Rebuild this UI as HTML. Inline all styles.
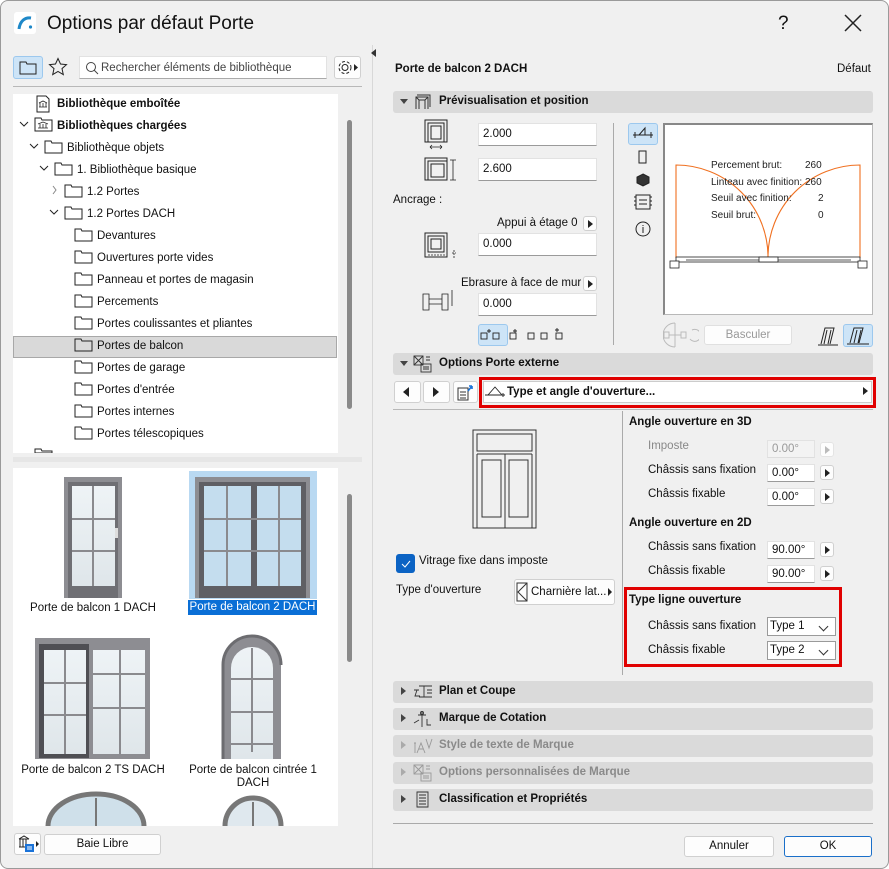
<!DOCTYPE html>
<html><head><meta charset="utf-8">
<style>
*{box-sizing:border-box;margin:0;padding:0}
body{width:889px;height:869px;background:#fff;font-family:"Liberation Sans",Arial,sans-serif;font-size:11.5px;color:#111;position:relative;overflow:hidden}
.win{position:absolute;left:0;top:0;width:889px;height:869px;background:#f0f0f0;border:1px solid #9a9a9a;border-radius:8px;overflow:hidden}
.a{position:absolute;white-space:nowrap}
.t{position:absolute;white-space:nowrap;line-height:14px}
.b{font-weight:bold}
.inp{position:absolute;background:#fff;border:1px solid #e2e2e2;border-bottom:1px solid #9a9a9a;padding-left:4px;line-height:21px}
.btn{position:absolute;background:#fdfdfd;border:1px solid #d0d0d0;border-radius:3px;text-align:center}
.sb{position:absolute;width:14px;height:15px;background:#fdfdfd;border:1px solid #d0d0d0;border-radius:3px}
.sb:after{content:"";position:absolute;left:4px;top:3px;border-left:5px solid #222;border-top:4px solid transparent;border-bottom:4px solid transparent}
.sb.dis:after{border-left-color:#bbb}
.hdr{position:absolute;left:392px;width:480px;height:22px;background:#dadada;border-radius:3px}
.hdr .tri{position:absolute;left:7px;top:8px;border-top:5px solid #444;border-left:4px solid transparent;border-right:4px solid transparent}
.hdr .trr{position:absolute;left:8px;top:6px;border-left:5px solid #444;border-top:4px solid transparent;border-bottom:4px solid transparent}
.hdr .lbl{position:absolute;left:46px;top:4px;font-weight:bold;font-size:11.5px}
.hdr.dis .lbl{color:#8a8a8a}.hdr.dis .trr{border-left-color:#aaa}
.sel{position:absolute;background:#fff;border:1px solid #9a9a9a;line-height:20px;padding-left:4px}
.sel:after{content:"";position:absolute;right:8px;top:5px;width:6px;height:6px;border-right:1px solid #333;border-bottom:1px solid #333;transform:rotate(45deg)}
</style></head><body>
<div class="win">
<svg class="a" style="left:13px;top:11px" width="22" height="22"><rect width="22" height="22" rx="3" fill="#fff"/><path d="M5 17 C6 9 11 5 17 6" stroke="#1e88c8" stroke-width="3" fill="none"/><circle cx="16.5" cy="15" r="1.6" fill="#1e88c8"/></svg>
<div class="t" style="left:46px;top:12px;font-size:19px;line-height:22px">Options par défaut Porte</div>
<div class="t" style="left:777px;top:12px;font-size:19px;line-height:22px">?</div>
<svg class="a" style="left:843px;top:13px" width="18" height="18"><path d="M1 1L17 17M17 1L1 17" stroke="#222" stroke-width="1.5"/></svg>

<div class="a" style="left:12px;top:55px;width:30px;height:23px;background:#cde4f7;border:1px solid #9cc8ee;border-radius:3px"></div>
<svg class="a" style="left:18px;top:59px" width="18" height="15"><path d="M1 2h6l1 2h9v10H1z" fill="none" stroke="#222"/></svg>
<svg class="a" style="left:47px;top:56px" width="20" height="20"><path d="M10 1.5l2.5 5.5 6 .6-4.5 4 1.3 6-5.3-3.1-5.3 3.1 1.3-6-4.5-4 6-.6z" fill="none" stroke="#222"/></svg>
<div class="a" style="left:78px;top:55px;width:248px;height:23px;background:#fff;border:1px solid #e2e2e2;border-bottom:1px solid #aaa"></div>
<svg class="a" style="left:84px;top:60px" width="14" height="14"><circle cx="6" cy="6" r="4.5" fill="none" stroke="#444"/><path d="M9 9l4 4" stroke="#444"/></svg>
<div class="t" style="left:100px;top:60px;color:#444;font-size:11.5px">Rechercher éléments de bibliothèque</div>
<div class="btn" style="left:333px;top:55px;width:27px;height:23px"></div>
<svg class="a" style="left:335px;top:58px" width="24" height="17"><circle cx="9" cy="8.5" r="3" fill="none" stroke="#222"/><circle cx="9" cy="8.5" r="6" fill="none" stroke="#222" stroke-dasharray="3 2"/><path d="M18 5l4 3.5-4 3.5z" fill="#222"/></svg>
<div class="a" style="left:12px;top:85px;width:349px;height:1px;background:#b8b8b8"></div>

<div class="a" style="left:12px;top:93px;width:325px;height:359px;background:#fff"></div>
<div class="a" style="left:12px;top:335px;width:324px;height:22px;background:#d9d9d9;border:1px solid #a8a8a8"></div>
<div class="a" style="left:346px;top:119px;width:5px;height:289px;background:#8a8a8a;border-radius:3px"></div>
<svg class="a" style="left:0;top:93px" width="337" height="359" fill="none" stroke="#222" stroke-width="1">
<path d="M36 2h9l3 3v13H36z"/><path d="M38 13h8M39 9v4M42 9v4M45 9v4M38 9l4-2 4 2" stroke-width=".8"/>
<path d="M19 28l4 4 4-4"/><path d="M34 24h6l1 2h10v11H34z"/><path d="M37 34h10M39 30v4M42 30v4M45 30v4M37 30l5-2 5 2" stroke-width=".8"/>
<path d="M29 50l4 4 4-4"/><path d="M44 47h6l1 2h10v10H44z"/>
<path d="M39 72l4 4 4-4"/><path d="M54 69h6l1 2h10v10H54z"/>
<path d="M52 92l3 4-3 4" stroke="#888"/><path d="M64 91h6l1 2h10v10H64z"/>
<path d="M49 116l4 4 4-4"/><path d="M64 113h6l1 2h10v10H64z"/>
<g id="f"><path d="M74 135h6l1 2h10v10H74z"/></g>
<use href="#f" y="22"/><use href="#f" y="44"/><use href="#f" y="66"/><use href="#f" y="88"/><use href="#f" y="110"/><use href="#f" y="132"/><use href="#f" y="154"/><use href="#f" y="176"/><use href="#f" y="198"/>
<path d="M34 355h6l1 2h10v2H34z"/>
</svg>
<div class="t b" style="left:56px;top:96px">Bibliothèque emboîtée</div>
<div class="t b" style="left:56px;top:118px">Bibliothèques chargées</div>
<div class="t" style="left:66px;top:140px">Bibliothèque objets</div>
<div class="t" style="left:76px;top:162px">1. Bibliothèque basique</div>
<div class="t" style="left:86px;top:184px">1.2 Portes</div>
<div class="t" style="left:86px;top:206px">1.2 Portes DACH</div>
<div class="t" style="left:96px;top:228px">Devantures</div>
<div class="t" style="left:96px;top:250px">Ouvertures porte vides</div>
<div class="t" style="left:96px;top:272px">Panneau et portes de magasin</div>
<div class="t" style="left:96px;top:294px">Percements</div>
<div class="t" style="left:96px;top:316px">Portes coulissantes et pliantes</div>
<div class="t" style="left:96px;top:338px">Portes de balcon</div>
<div class="t" style="left:96px;top:360px">Portes de garage</div>
<div class="t" style="left:96px;top:382px">Portes d'entrée</div>
<div class="t" style="left:96px;top:404px">Portes internes</div>
<div class="t" style="left:96px;top:426px">Portes télescopiques</div>
<div class="a" style="left:12px;top:456px;width:349px;height:5px;background:#e6e6e6"></div>

<div class="a" style="left:12px;top:467px;width:325px;height:358px;background:#fff"></div>
<div class="a" style="left:346px;top:493px;width:5px;height:168px;background:#8a8a8a;border-radius:3px"></div>
<div class="a" style="left:188px;top:470px;width:128px;height:128px;background:#b9d9f2"></div>
<svg class="a" style="left:12px;top:467px" width="325" height="358">
<defs><linearGradient id="g" x1="0" y1="0" x2="0" y2="1"><stop offset="0" stop-color="#eef3f6"/><stop offset="1" stop-color="#dfe6ea"/></linearGradient></defs>
<rect x="51" y="9" width="58" height="121" fill="#8d8d92"/><rect x="55" y="14" width="50" height="116" fill="#6f6f74"/>
<rect x="59" y="18" width="43" height="100" fill="url(#g)"/><path d="M80 18v100M59 51h43M59 83h43" stroke="#8a8a8e" stroke-width="2"/><rect x="102" y="60" width="3" height="10" fill="#ddd"/>
<rect x="182" y="9" width="115" height="121" fill="#8d8d92"/><rect x="186" y="14" width="107" height="116" fill="#5f5f64"/>
<rect x="191" y="18" width="47" height="100" fill="#c4ddee"/><rect x="244" y="18" width="44" height="100" fill="#c4ddee"/>
<path d="M214 18v100M266 18v100M191 51h97M191 83h97" stroke="#8a8a8e" stroke-width="2"/>
<rect x="22" y="170" width="115" height="121" fill="#8d8d92"/><rect x="26" y="176" width="50" height="114" fill="#4f4f54"/>
<rect x="31" y="182" width="42" height="104" fill="url(#g)"/><rect x="80" y="182" width="52" height="104" fill="url(#g)"/>
<path d="M52 182v104M107 182v104M31 215h42M31 247h42M80 206h52M80 240h52" stroke="#8a8a8e" stroke-width="2"/>
<path d="M210 291V197a29 29 0 0 1 58 0v94z" fill="#8d8d92"/><path d="M218 291V200a21 21 0 0 1 42 0v91z" fill="url(#g)"/>
<path d="M239 180v104M218 211h42M218 244h42M218 276h42" stroke="#8a8a8e" stroke-width="2"/>
<path d="M210 291V197a29 29 0 0 1 58 0" fill="none" stroke="#6c6c70" stroke-width="3"/>
<path d="M35 358a45 30 0 0 1 96 0" fill="#cfe0ea" stroke="#777" stroke-width="5"/><path d="M83 330v28" stroke="#777" stroke-width="2"/>
<path d="M212 358a28 28 0 0 1 56 0" fill="#dfe8ee" stroke="#777" stroke-width="5"/><path d="M240 334v24" stroke="#777" stroke-width="2"/>
</svg>
<div class="t" style="left:12px;top:600px;width:160px;text-align:center">Porte de balcon 1 DACH</div>
<div class="t" style="left:187px;top:599px;width:129px;height:15px;background:#0a6fd6;color:#fff;text-align:center">Porte de balcon 2 DACH</div>
<div class="t" style="left:12px;top:762px;width:160px;text-align:center">Porte de balcon 2 TS DACH</div>
<div class="t" style="left:172px;top:762px;width:160px;text-align:center">Porte de balcon cintrée 1</div>
<div class="t" style="left:172px;top:775px;width:160px;text-align:center">DACH</div>
<div class="btn" style="left:13px;top:832px;width:27px;height:22px"></div>
<svg class="a" style="left:16px;top:834px" width="22" height="18"><path d="M2 4h10M3 4v8M6 4v8M9 4v8M2 12h10M2 4l5-3 5 3" stroke="#222" fill="none"/><rect x="8" y="9" width="9" height="8" fill="#1a73d9"/><path d="M10 12h5M10 14h5" stroke="#fff"/><path d="M19 6l3 3-3 3z" fill="#222"/></svg>
<div class="btn" style="left:43px;top:833px;width:117px;height:21px;line-height:19px">Baie Libre</div>
<div class="a" style="left:371px;top:44px;width:1px;height:825px;background:#d8d8d8"></div>
<div class="a" style="left:370px;top:48px;border-right:5px solid #333;border-top:4px solid transparent;border-bottom:4px solid transparent"></div>

<div class="t b" style="left:394px;top:61px">Porte de balcon 2 DACH</div>
<div class="t" style="left:836px;top:61px">Défaut</div>

<div class="hdr" style="top:90px"><div class="tri"></div><div class="lbl">Prévisualisation et position</div></div>
<svg class="a" style="left:414px;top:93px" width="16" height="16"><path d="M1 15V3h12v12M4 15V6h6v9M1 3l3 3M13 3l-3 3M2 1h13v12" fill="none" stroke="#333"/></svg>

<svg class="a" style="left:421px;top:117px" width="40" height="230" fill="none" stroke="#222">
<rect x="3" y="2" width="22" height="22"/><rect x="6" y="5" width="16" height="19"/><rect x="9" y="8" width="10" height="13"/><path d="M8 29h12M8 29l2-2M8 29l2 2M20 29l-2-2M20 29l-2 2" stroke-width=".8"/>
<rect x="3" y="40" width="22" height="22"/><rect x="6" y="43" width="19" height="19"/><rect x="9" y="46" width="13" height="13"/><path d="M31 42v20M28 42h6M28 62h6" stroke-width=".8"/>
<rect x="3" y="115" width="22" height="24"/><rect x="6" y="118" width="16" height="16"/><rect x="9" y="121" width="10" height="10"/><path d="M6 137h18M32 132v8M30 135h4" stroke-width=".8" stroke-dasharray="2 1"/>
<path d="M1 176h6v16H1zM20 176h6v16h-6zM7 181h13M7 186h13M30 172v8M30 188v-8" stroke-width=".8"/>
</svg>
<div class="inp" style="left:477px;top:122px;width:119px;height:23px">2.000</div>
<div class="inp" style="left:477px;top:157px;width:119px;height:23px">2.600</div>
<div class="t" style="left:392px;top:192px">Ancrage :</div>
<div class="t" style="left:496px;top:215px">Appui à étage 0</div><div class="sb" style="left:582px;top:215px"></div>
<div class="inp" style="left:477px;top:232px;width:119px;height:23px">0.000</div>
<div class="t" style="left:460px;top:275px">Ebrasure à face de mur</div><div class="sb" style="left:582px;top:275px"></div>
<div class="inp" style="left:477px;top:292px;width:119px;height:23px">0.000</div>
<div class="a" style="left:477px;top:323px;width:30px;height:22px;background:#cde4f7;border:1px solid #9cc8ee;border-radius:3px"></div>
<svg class="a" style="left:479px;top:326px" width="90" height="16" fill="none" stroke="#222" stroke-width=".9">
<rect x="1" y="6" width="6" height="6"/><path d="M9 2v4M7 4h4"/><rect x="13" y="6" width="6" height="6"/>
<rect x="30" y="6" width="6" height="6"/><path d="M35 2v4M33 4h4"/>
<rect x="48" y="6" width="6" height="6"/><rect x="61" y="6" width="6" height="6"/><rect x="76" y="6" width="6" height="6"/><path d="M77 1v4M75 3h4"/>
</svg>
<div class="a" style="left:612px;top:122px;width:1px;height:222px;background:#aaa"></div>
<div class="a" style="left:627px;top:122px;width:30px;height:22px;background:#cde4f7;border:1px solid #9cc8ee;border-radius:3px"></div>
<svg class="a" style="left:630px;top:124px" width="26" height="112" fill="none" stroke="#222">
<path d="M2 10h20M4 7v6M20 7v6M8 10l6-7v7"/>
<rect x="8" y="26" width="7" height="12"/>
<path d="M12 49l6 3v6l-6 3-6-3v-6z" fill="#333"/>
<path d="M5 70h14v14H5zM3 72h2M3 76h2M3 80h2M19 72h2M19 76h2M19 80h2M8 75h8M8 79h8"/>
<circle cx="12" cy="104" r="7"/><path d="M12 102v6M12 100v1"/>
</svg>
<div class="a" style="left:662px;top:122px;width:210px;height:192px;background:#fff;border:1px solid #b8b8b8;border-top:2px solid #888;border-left:2px solid #888"></div>
<svg class="a" style="left:662px;top:122px" width="210" height="192">
<path d="M13 135V42A92 92 0 0 1 105 134M197 135V42A92 92 0 0 0 105 134" stroke="#f07020" fill="none" stroke-width="1.1"/>
<g fill="#fff" stroke="#222" stroke-width=".8"><rect x="13" y="134" width="184" height="5"/><path d="M23 137h73M115 137h73"/><rect x="96" y="134" width="19" height="5"/><rect x="7" y="138" width="9" height="7"/><rect x="195" y="138" width="9" height="7"/></g>
<g font-size="10" font-family="Liberation Sans" fill="#222">
<text x="48" y="45">Percement brut:</text><text x="142" y="45">260</text>
<text x="48" y="62">Linteau avec finition:</text><text x="142" y="62">260</text>
<text x="48" y="78">Seuil avec finition:</text><text x="155" y="78">2</text>
<text x="48" y="95">Seuil brut:</text><text x="155" y="95">0</text></g>
</svg>
<svg class="a" style="left:662px;top:321px" width="36" height="26" fill="none" stroke="#bbb"><path d="M12 1v24M12 1a12 12 0 0 0 0 24M1 10h5v6H1zM18 10h5v6h-5zM6 13h12M29 8a6 6 0 1 1-2 9"/></svg>
<div class="btn" style="left:703px;top:324px;width:88px;height:20px;line-height:18px;color:#999;border-color:#e0e0e0">Basculer</div>
<svg class="a" style="left:815px;top:324px" width="58" height="22" fill="none" stroke="#222"><path d="M2 20h20M5 19l4-16h9l-4 16M8 19l3-14M12 19l3-14"/></svg>
<div class="a" style="left:842px;top:323px;width:30px;height:23px;background:#cde4f7;border:1px solid #9cc8ee;border-radius:3px"></div>
<svg class="a" style="left:845px;top:325px" width="26" height="20" fill="none" stroke="#222"><path d="M1 18h22M4 17l4-15h9l-4 15M8 17l3-13M12 17l3-13"/></svg>

<div class="hdr" style="top:352px"><div class="tri"></div><div class="lbl">Options Porte externe</div></div>
<svg class="a" style="left:412px;top:354px" width="20" height="18" fill="none" stroke="#333" stroke-width=".9"><rect x="1" y="1" width="9" height="9"/><path d="M1 1l9 9M10 1L1 10"/><rect x="8" y="9" width="10" height="8"/><path d="M10 12h6M10 14h6M13 2h4M13 5h4"/></svg>
<div class="btn" style="left:393px;top:380px;width:27px;height:22px"></div><div class="a" style="left:402px;top:386px;border-right:6px solid #222;border-top:5px solid transparent;border-bottom:5px solid transparent"></div>
<div class="btn" style="left:422px;top:380px;width:27px;height:22px"></div><div class="a" style="left:432px;top:386px;border-left:6px solid #222;border-top:5px solid transparent;border-bottom:5px solid transparent"></div>
<div class="btn" style="left:452px;top:380px;width:25px;height:22px"></div>
<svg class="a" style="left:455px;top:382px" width="20" height="18" fill="none" stroke="#333"><path d="M2 5h10v12H2zM4 9h6M4 12h6M4 15h6"/><path d="M12 8l4-5M16 3h-3M16 3v3" stroke="#1a73d9" stroke-width="1.6"/></svg>
<div class="a" style="left:478px;top:376px;width:397px;height:31px;border:3px solid #e00000"></div>
<div class="a" style="left:482px;top:380px;width:389px;height:22px;background:#fff;border:1px solid #ccc"></div>
<svg class="a" style="left:483px;top:383px" width="22" height="14" fill="none" stroke="#222" stroke-width=".9"><path d="M1 11h20M4 11l7-8 7 8M19 9v4"/></svg>
<div class="t b" style="left:506px;top:384px">Type et angle d'ouverture...</div>
<div class="a" style="left:862px;top:386px;border-left:5px solid #222;border-top:4px solid transparent;border-bottom:4px solid transparent"></div>
<div class="a" style="left:392px;top:408px;width:480px;height:1px;background:#b8b8b8"></div>

<svg class="a" style="left:471px;top:428px" width="68" height="102" fill="none" stroke="#333"><rect x="1" y="1" width="63" height="98"/><rect x="5" y="5" width="55" height="17"/><path d="M5 22h55M5 25h55M5 25v74M60 25v74M33 25v74"/><rect x="10" y="31" width="19" height="57"/><rect x="37" y="31" width="19" height="57"/></svg>
<div class="a" style="left:395px;top:553px;width:19px;height:19px;background:#0b63c4;border-radius:3px"></div>
<svg class="a" style="left:399px;top:557px" width="12" height="12"><path d="M2 6l3 3 5-6" stroke="#fff" fill="none" stroke-width="1"/></svg>
<div class="t" style="left:418px;top:553px">Vitrage fixe dans imposte</div>
<div class="t" style="left:395px;top:582px">Type d'ouverture</div>
<div class="btn" style="left:513px;top:578px;width:101px;height:26px;text-align:left"></div>
<svg class="a" style="left:515px;top:581px" width="12" height="20" fill="none" stroke="#333"><rect x="1" y="1" width="10" height="18"/><path d="M11 1L2 10l9 9"/></svg>
<div class="t" style="left:530px;top:584px">Charnière lat...</div>
<div class="a" style="left:607px;top:587px;border-left:4px solid #222;border-top:4px solid transparent;border-bottom:4px solid transparent"></div>
<div class="a" style="left:621px;top:410px;width:1px;height:264px;background:#aaa"></div>

<div class="t b" style="left:628px;top:414px">Angle ouverture en 3D</div>
<div class="t" style="left:647px;top:438px;color:#888">Imposte</div>
<div class="inp" style="left:766px;top:439px;width:48px;height:18px;line-height:17px;background:#f3f3f3;color:#999;border-bottom-color:#ddd">0.00°</div><div class="sb dis" style="left:819px;top:441px;border-color:#e4e4e4"></div>
<div class="t" style="left:647px;top:462px">Châssis sans fixation</div>
<div class="inp" style="left:766px;top:463px;width:48px;height:18px;line-height:17px">0.00°</div><div class="sb" style="left:819px;top:464px"></div>
<div class="t" style="left:647px;top:486px">Châssis fixable</div>
<div class="inp" style="left:766px;top:487px;width:48px;height:18px;line-height:17px">0.00°</div><div class="sb" style="left:819px;top:488px"></div>
<div class="t b" style="left:628px;top:515px">Angle ouverture en 2D</div>
<div class="t" style="left:647px;top:539px">Châssis sans fixation</div>
<div class="inp" style="left:766px;top:540px;width:48px;height:18px;line-height:17px">90.00°</div><div class="sb" style="left:819px;top:541px"></div>
<div class="t" style="left:647px;top:563px">Châssis fixable</div>
<div class="inp" style="left:766px;top:564px;width:48px;height:18px;line-height:17px">90.00°</div><div class="sb" style="left:819px;top:565px"></div>
<div class="a" style="left:623px;top:586px;width:218px;height:80px;border:3px solid #e00000"></div>
<div class="t b" style="left:628px;top:592px">Type ligne ouverture</div>
<div class="t" style="left:647px;top:618px">Châssis sans fixation</div>
<div class="sel" style="left:766px;top:616px;width:69px;height:19px;line-height:17px;padding-left:2px">Type 1</div>
<div class="t" style="left:647px;top:642px">Châssis fixable</div>
<div class="sel" style="left:766px;top:640px;width:69px;height:19px;line-height:17px;padding-left:2px">Type 2</div>

<div class="hdr" style="top:680px"><div class="trr"></div><div class="lbl">Plan et Coupe</div></div>
<svg class="a" style="left:412px;top:683px" width="20" height="16" fill="none" stroke="#333" stroke-width=".9"><path d="M1 6h5M4 6l-2 6h5M6 2h13M6 13h13M11 2v11M14 6h5M14 9h5"/></svg>
<div class="hdr" style="top:707px"><div class="trr"></div><div class="lbl">Marque de Cotation</div></div>
<svg class="a" style="left:412px;top:709px" width="20" height="18" fill="none" stroke="#333" stroke-width=".9"><path d="M9 1v16M5 5h8M1 13l5-3M14 9v6h4"/><circle cx="9" cy="3" r="1.5"/></svg>
<div class="hdr dis" style="top:734px"><div class="trr"></div><div class="lbl">Style de texte de Marque</div></div>
<svg class="a" style="left:412px;top:736px" width="20" height="18" fill="none" stroke="#999" stroke-width=".9"><path d="M2 6v10M1 6h2M4 16l4-10 4 10M6 12h4M13 2l3 9 3-9"/></svg>
<div class="hdr dis" style="top:761px"><div class="trr"></div><div class="lbl">Options personnalisées de Marque</div></div>
<svg class="a" style="left:412px;top:763px" width="20" height="18" fill="none" stroke="#999" stroke-width=".9"><rect x="1" y="1" width="9" height="9"/><path d="M1 1l9 9M10 1L1 10"/><rect x="8" y="9" width="10" height="8"/><path d="M10 12h6M10 14h6M13 2h4M13 5h4"/></svg>
<div class="hdr" style="top:788px"><div class="trr"></div><div class="lbl">Classification et Propriétés</div></div>
<svg class="a" style="left:414px;top:790px" width="16" height="18" fill="none" stroke="#333" stroke-width=".9"><path d="M2 1h11v15H2zM4 4h7M4 7h7M4 10h7M4 13h7"/></svg>
<div class="a" style="left:392px;top:822px;width:480px;height:1px;background:#aaa"></div>
<div class="btn" style="left:683px;top:835px;width:90px;height:21px;line-height:19px">Annuler</div>
<div class="btn" style="left:783px;top:835px;width:88px;height:21px;line-height:19px;border:1px solid #1a6fc9">OK</div>
</div>
</body></html>
